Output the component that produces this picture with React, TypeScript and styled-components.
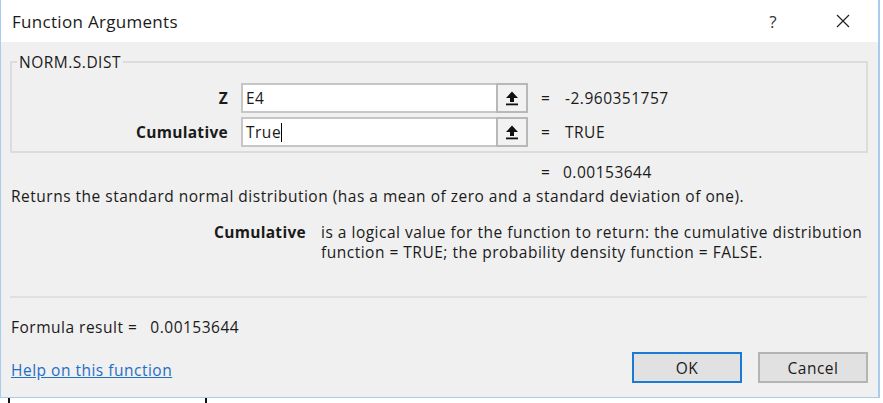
import React from 'react';
import styled, { createGlobalStyle } from 'styled-components';

const GlobalStyle = createGlobalStyle`
  html, body {
    margin: 0;
    padding: 0;
    background: #ffffff;
  }
  body {
    font-family: "Open Sans", "Noto Sans", sans-serif;
    color: #1a1a1a;
  }
`;

const Page = styled.div`
  width: 883px;
  height: 403px;
  overflow: hidden;
  background: #ffffff;
  display: flex;
  flex-direction: column;
`;

const Window = styled.div`
  width: 880px;
  height: 398px;
  box-sizing: border-box;
  border: 1px solid #a9cbee;
  border-top: none;
  border-right-width: 2px;
  background: #f0f0f0;
  display: flex;
  flex-direction: column;
`;

const TitleBar = styled.div`
  height: 42px;
  flex: none;
  background: #ffffff;
  display: flex;
  align-items: center;
  padding-left: 11px;
  font-size: 17px;
  letter-spacing: 0.3px;
  color: #1b1b1b;
`;

const Title = styled.div`
  flex: 1;
`;

const TitleButton = styled.div`
  width: 70px;
  display: flex;
  justify-content: center;
  align-items: center;
  font-size: 17px;
  color: #333;
`;

const Body = styled.div`
  flex: 1;
  display: flex;
  flex-direction: column;
  padding: 0 10px 0 9px;
  font-size: 15.5px;
  letter-spacing: 0.5px;
  line-height: 20px;
`;

const Group = styled.fieldset`
  margin: 12px 0 0 0;
  padding: 13px 0 4px 0;
  border: 2px solid #dcdcdc;
  display: flex;
  flex-direction: column;
  gap: 4px;
`;

const Legend = styled.legend`
  padding: 0 2px;
  margin-left: 5px;
  line-height: 16px;
`;

const ArgRow = styled.div`
  display: grid;
  grid-template-columns: 216px 287px 11px 1fr;
  column-gap: 13px;
  align-items: center;
  height: 30px;
`;

const ArgLabel = styled.div`
  text-align: right;
  font-weight: 700;
  letter-spacing: 0.3px;
`;

const InputBox = styled.div`
  display: flex;
  height: 30px;
`;

const Field = styled.div`
  flex: 1;
  background: #ffffff;
  border: 2px solid #c6c6c6;
  border-right: none;
  display: flex;
  align-items: center;
  padding-left: 3px;
`;

const Caret = styled.span`
  display: inline-block;
  width: 1px;
  height: 19px;
  background: #000;
`;

const RefButton = styled.div`
  width: 28px;
  background: #f2f2f2;
  border: 2px solid #b8b8b8;
  display: flex;
  align-items: center;
  justify-content: center;
`;

const ResultRow = styled.div`
  display: grid;
  grid-template-columns: 531px 22px 1fr;
  margin-top: 9px;
  height: 20px;
  align-items: center;
`;

const Description = styled.div`
  margin-top: 4px;
  padding-left: 1px;
`;

const ArgHelp = styled.div`
  display: grid;
  grid-template-columns: 296px 1fr;
  column-gap: 15px;
  margin-top: 16px;
`;

const HelpName = styled.div`
  text-align: right;
  font-weight: 700;
  letter-spacing: 0.3px;
`;

const Separator = styled.div`
  margin-top: 34px;
  height: 0;
  border-top: 2px solid #e0e0e0;
  margin-right: 1px;
`;

const FormulaRow = styled.div`
  margin-top: 19px;
  padding-left: 1px;
  display: flex;
  gap: 13px;
`;

const Footer = styled.div`
  margin-top: 15px;
  display: flex;
  align-items: center;
`;

const HelpLink = styled.a`
  flex: 1;
  color: #1f6fc5;
  text-decoration: underline;
  padding-left: 1px;
  padding-top: 4px;
  cursor: pointer;
`;

const DialogButton = styled.button<{ $primary?: boolean }>`
  width: 110px;
  height: 31px;
  margin-left: 16px;
  box-sizing: border-box;
  background: #e1e1e1;
  border: 2px solid ${(p) => (p.$primary ? '#1a7ad4' : '#b4b4b4')};
  font-family: inherit;
  font-size: 15.5px;
  letter-spacing: 0.5px;
  color: #1a1a1a;
  padding: 0;
`;

const BelowStrip = styled.div`
  flex: 1;
  display: flex;
  padding-left: 8px;
  gap: 195px;
`;

const Tick = styled.div`
  width: 2px;
  height: 5px;
  background: #111;
`;

function UpArrow() {
  return (
    <svg width="16" height="16" viewBox="0 0 16 16">
      <path d="M8 1.5 L14 8 L10 8 L10 12 L6 12 L6 8 L2 8 Z" fill="#111" />
      <rect x="2" y="13.5" width="12" height="1.8" fill="#111" />
    </svg>
  );
}

function CloseIcon() {
  return (
    <svg width="14" height="14" viewBox="0 0 14 14">
      <path d="M1 1 L13 13 M13 1 L1 13" stroke="#222" strokeWidth="1.2" />
    </svg>
  );
}

export default function App() {
  return (
    <>
      <GlobalStyle />
      <Page>
        <Window>
          <TitleBar>
            <Title>Function Arguments</Title>
            <TitleButton>?</TitleButton>
            <TitleButton>
              <CloseIcon />
            </TitleButton>
          </TitleBar>
          <Body>
            <Group>
              <Legend>NORM.S.DIST</Legend>
              <ArgRow>
                <ArgLabel>Z</ArgLabel>
                <InputBox>
                  <Field>E4</Field>
                  <RefButton>
                    <UpArrow />
                  </RefButton>
                </InputBox>
                <span>=</span>
                <span>-2.960351757</span>
              </ArgRow>
              <ArgRow>
                <ArgLabel>Cumulative</ArgLabel>
                <InputBox>
                  <Field>
                    True
                    <Caret />
                  </Field>
                  <RefButton>
                    <UpArrow />
                  </RefButton>
                </InputBox>
                <span>=</span>
                <span>TRUE</span>
              </ArgRow>
            </Group>
            <ResultRow>
              <span />
              <span>=</span>
              <span>0.00153644</span>
            </ResultRow>
            <Description>
              Returns the standard normal distribution (has a mean of zero and a standard deviation of one).
            </Description>
            <ArgHelp>
              <HelpName>Cumulative</HelpName>
              <div>
                is a logical value for the function to return: the cumulative distribution
                <br />
                function = TRUE; the probability density function = FALSE.
              </div>
            </ArgHelp>
            <Separator />
            <FormulaRow>
              <span>Formula result =</span>
              <span>0.00153644</span>
            </FormulaRow>
            <Footer>
              <HelpLink>Help on this function</HelpLink>
              <DialogButton $primary>OK</DialogButton>
              <DialogButton>Cancel</DialogButton>
            </Footer>
          </Body>
        </Window>
        <BelowStrip>
          <Tick />
          <Tick />
        </BelowStrip>
      </Page>
    </>
  );
}
